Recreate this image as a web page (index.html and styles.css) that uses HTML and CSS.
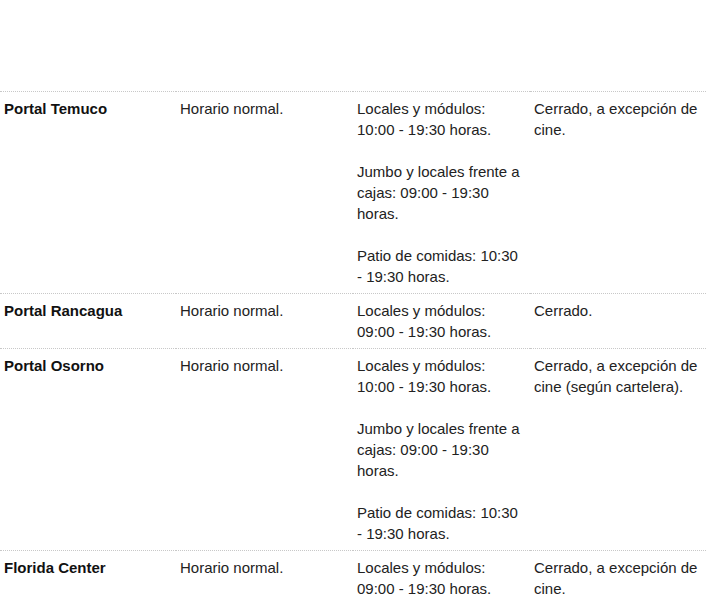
FILE: index.html
```html
<!DOCTYPE html>
<html lang="es">
<head>
<meta charset="utf-8">
<link rel="stylesheet" href="styles.css">
</head>
<body>
<table class="hours">
  <colgroup>
    <col class="c-a"><col class="c-b"><col class="c-b"><col class="c-a">
  </colgroup>
  <tbody>
    <tr>
      <td class="mall">Portal Temuco</td>
      <td>Horario normal.</td>
      <td><p>Locales y módulos: 10:00 - 19:30 horas.</p><p>Jumbo y locales frente a cajas: 09:00 - 19:30 horas.</p><p>Patio de comidas: 10:30 - 19:30 horas.</p></td>
      <td>Cerrado, a excepción de cine.</td>
    </tr>
    <tr>
      <td class="mall">Portal Rancagua</td>
      <td>Horario normal.</td>
      <td><p>Locales y módulos: 09:00 - 19:30 horas.</p></td>
      <td>Cerrado.</td>
    </tr>
    <tr>
      <td class="mall">Portal Osorno</td>
      <td>Horario normal.</td>
      <td><p>Locales y módulos: 10:00 - 19:30 horas.</p><p>Jumbo y locales frente a cajas: 09:00 - 19:30 horas.</p><p>Patio de comidas: 10:30 - 19:30 horas.</p></td>
      <td>Cerrado, a excepción de cine (según cartelera).</td>
    </tr>
    <tr>
      <td class="mall">Florida Center</td>
      <td>Horario normal.</td>
      <td><p>Locales y módulos: 09:00 - 19:30 horas.</p></td>
      <td>Cerrado, a excepción de cine.</td>
    </tr>
  </tbody>
</table>
</body>
</html>
```
FILE: styles.css
```css
html, body {
  margin: 0;
  padding: 0;
  background: #fff;
}
body {
  font-family: "Liberation Sans", Arial, sans-serif;
  font-size: 15px;
  line-height: 21px;
  color: #222;
}
.hours {
  margin-top: 91px;
  width: 706px;
  border-collapse: collapse;
  table-layout: fixed;
}
.hours col.c-a {
  width: 176px;
}
.hours col.c-b {
  width: 177px;
}
.hours td {
  vertical-align: top;
  border-top: 1px dotted #c8c8c8;
  padding: 6px 6px 6px 4px;
}
.hours td.mall {
  font-weight: bold;
  color: #111;
}
.hours p {
  margin: 0 0 21px;
}
.hours p:last-child {
  margin-bottom: 0;
}
```
